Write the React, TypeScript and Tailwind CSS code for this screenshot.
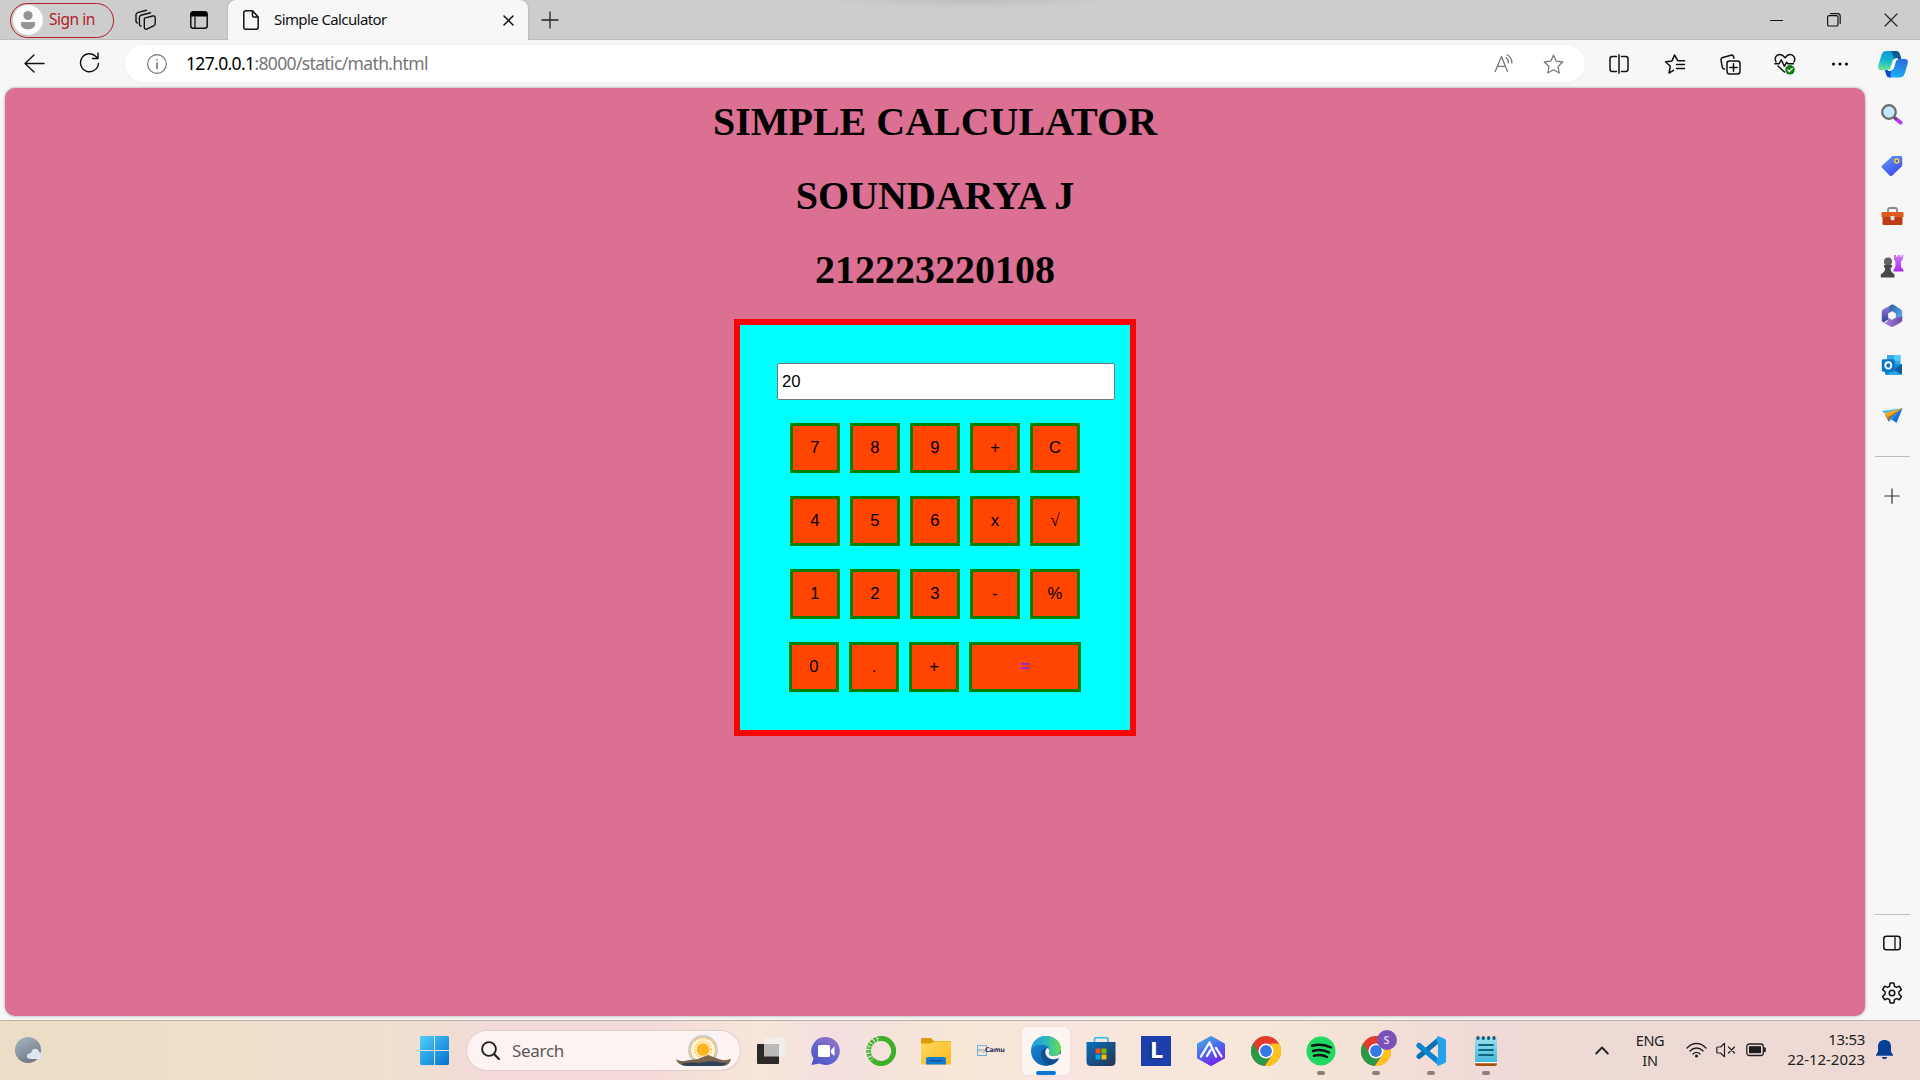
import React from "react";

type IconProps = { w: number; h: number; vb?: string; className?: string; children: React.ReactNode };

function Icon({ w, h, vb, className = "", children }: IconProps) {
  return (
    <svg width={w} height={h} viewBox={vb ?? `0 0 ${w} ${h}`} fill="none" stroke="none" strokeLinecap="round" strokeLinejoin="round" className={`shrink-0 ${className}`}>
      {children}
    </svg>
  );
}

function TabStrip() {
  return (
    <div className="flex h-10 items-center bg-[#cdcdcd] shadow-[inset_0_-1px_0_#bdbdbd]">
      <div className="ml-[10px] flex h-[35px] w-[104px] items-center rounded-full border-[1.5px] border-[#b01e28]">
        <Icon w={30} h={30} className="ml-[2px]">
          <circle cx="15" cy="15" r="15" fill="#fbfbfb" />
          <circle cx="15" cy="10.5" r="4.6" fill="#949494" />
          <path d="M8 17h14v2.5c0 3-3.2 4.8-7 4.8s-7-1.800-7-4.800z" fill="#949494" />
        </Icon>
        <span className="-mt-[2px] ml-[6px] whitespace-nowrap text-[15.5px] leading-5 tracking-[-0.5px] text-[#b01e28]">Sign in</span>
      </div>
      <Icon w={22} h={22} className="ml-[21px]">
        <g stroke="#111" strokeWidth="1.4">
          <path d="M9.500 9.200l8-2.200c1.500-.4 2.700.3 2.700 1.800v5.800c0 1.100-.6 1.900-1.600 2.200l-6.800 3.300c-1.500.4-2.500-.3-2.500-1.800v-7.300c0-1 .1-1.500.2-1.800z" />
          <path d="M6 17l-.6-.2c-.8-.4-1-.9-1-1.700V8.600c0-1.200.5-2 1.600-2.400l9.500-2.400" />
          <path d="M2.200 14l-.5-.4c-.5-.4-.7-.9-.7-1.600V6c0-1.200.5-2 1.600-2.400L11.500 1.200" />
        </g>
      </Icon>
      <Icon w={18} h={18} className="ml-[33px]">
        <rect x=".8" y=".8" width="16.400" height="16.400" rx="2.500" stroke="#111" strokeWidth="1.500" />
        <path d="M.8 3.200C.8 1.700 1.700.8 3.200.8h11.600c1.500 0 2.400.9 2.400 2.400v2.300H.8z" fill="#000" />
        <path d="M5 6v11" stroke="#111" strokeWidth="1.300" />
      </Icon>
      <div className="ml-[20px] flex h-10 w-[300px] items-center rounded-t-[8px] bg-[#f7f7f7] shadow-[0_0_2px_#999] [clip-path:inset(0_-4px_0_-4px)]">
        <Icon w={16} h={20} className="ml-[15px]">
          <path d="M3 .8h6.500l5.700 6.200v10.300c0 1.200-.7 1.900-1.900 1.900H3c-1.300 0-2.200-.7-2.200-1.900V2.700C.8 1.500 1.600.8 3 .8z M9.500.8v4.600c0 1 .5 1.600 1.500 1.600h4.200" stroke="#111" strokeWidth="1.500" />
        </Icon>
        <span className="-mt-[2px] ml-[15px] w-[215px] whitespace-nowrap text-[15px] leading-5 tracking-[-0.6px] text-[#111]">Simple Calculator</span>
        <Icon w={11} h={11} className="ml-[14px] mt-[1px]">
          <path d="M1 1l9 9M10 1l-9 9" stroke="#111" strokeWidth="1.500" />
        </Icon>
      </div>
      <Icon w={18} h={18} className="-mt-[1px] ml-[13px]">
        <path d="M9 1v16M1 9h16" stroke="#222" strokeWidth="1.300" />
      </Icon>
      <div className="ml-[262px] h-[8px] w-[300px] self-start bg-[radial-gradient(ellipse_at_top,#bfbfbf_0%,#cdcdcd_70%)]" />
      <div className="ml-auto flex items-center pr-[22px]">
        <Icon w={13} h={13}><path d="M0 6.500h13" stroke="#111" strokeWidth="1" /></Icon>
        <Icon w={14} h={14} className="ml-[44px]">
          <rect x=".6" y="2.600" width="10.400" height="10.400" rx="1.600" stroke="#111" strokeWidth="1.200" />
          <path d="M3.500.6h7c1.600 0 2.700 1 2.700 2.700v7" stroke="#111" strokeWidth="1.200" />
        </Icon>
        <Icon w={14} h={14} className="ml-[43px]"><path d="M1 1l12 12M13 1L1 13" stroke="#222" strokeWidth="1.200" /></Icon>
      </div>
    </div>
  );
}

const STAR = "M10.500 1.200l2.800 6 6.400.8-4.700 4.500 1.200 6.500-5.700-3.200-5.700 3.200 1.200-6.500L1.300 8l6.400-.8z";

function Toolbar() {
  return (
    <div className="flex h-12 items-center bg-[#f7f7f7]">
      <Icon w={21} h={19} className="ml-[24px] -mt-[2px]">
        <path d="M10 1L1 9.500 10 18M1 9.500h19" stroke="#111" strokeWidth="1.400" />
      </Icon>
      <Icon w={21} h={22} className="ml-[34px] -mt-[2px]">
        <path d="M19.500 11.500a9 9 0 1 1-2.500-7L19 6.500M19 1v5.500h-5.500" stroke="#111" strokeWidth="1.400" />
      </Icon>
      <div className="-mt-[1px] ml-[25px] flex h-[37px] w-[1460px] items-center rounded-full bg-white shadow-[0_0_5px_#ededed]">
        <Icon w={20} h={20} className="ml-[22px]">
          <circle cx="10" cy="10" r="9.300" stroke="#747474" strokeWidth="1.200" />
          <path d="M10 9v5.500M10 5.800v.3" stroke="#666" strokeWidth="1.500" />
        </Icon>
        <span className="-mt-[1px] ml-[19px] whitespace-nowrap text-[17.5px] leading-6 tracking-[-0.64px] text-[#767676]"><span className="text-black">127.0.0.1</span>:8000/static/math.html</span>
        <div className="ml-auto flex items-center pr-[21px]">
          <Icon w={21} h={20} className="mr-[28px]">
            <path d="M1.200 17.500L7.500 2.500l6 15M3.300 12.300h8.200" stroke="#777" strokeWidth="1.300" />
            <path d="M11.200 3.800c1.500 1.200 2.300 2.800 2.200 5M12 .8c3.200 1.700 5 4.500 4.800 8.200" stroke="#777" strokeWidth="1.300" transform="translate(1 0)" />
          </Icon>
          <Icon w={21} h={20}><path d={STAR} stroke="#777" strokeWidth="1.300" /></Icon>
        </div>
      </div>
      <Icon w={20} h={20} className="ml-[24px]">
        <path d="M7.500 2.500H3.300C1.800 2.500 1 3.300 1 4.800v10.400c0 1.500.8 2.300 2.300 2.300h4.200M12.500 2.500h4.200c1.500 0 2.300.8 2.300 2.300v10.400c0 1.500-.8 2.300-2.300 2.300h-4.200M10 .8v18.400" stroke="#111" strokeWidth="1.500" />
      </Icon>
      <Icon w={22} h={20} className="ml-[35px]">
        <path d="M20.500 6.700h-6.700L10.500 1 8 6.900l-6.500.9 4.800 4.500-1.300 6.700 4.500-2.600M12.500 10.500h8M12.500 14.500h8" stroke="#111" strokeWidth="1.500" />
      </Icon>
      <Icon w={21} h={21} className="ml-[34px]">
        <rect x="7" y="7" width="13" height="13" rx="2.500" stroke="#111" strokeWidth="1.500" />
        <path d="M13.500 9.800v7.400M9.800 13.500h7.400M4.500 15l-1-.3c-.7-.3-1-.8-1.200-1.500L1 6.200c-.2-1.500.3-2.300 1.700-2.700L11 1.200c1.400-.3 2.200.1 2.600 1.400l.3 1.600" stroke="#111" strokeWidth="1.500" />
      </Icon>
      <Icon w={22} h={22} className="ml-[33px]">
        <path d="M2 9C-.2 4.200 3 1.500 5.800 1.500c2 0 3.500 1 5.200 3.200 1.700-2.200 3.200-3.200 5.200-3.200C19.500 1.500 22 5 20 9M1 10.800h4l2.300-4 3 6.500 2.300-4 1.300 1.500h5.500M4 13l6.500 6" stroke="#111" strokeWidth="1.500" />
        <circle cx="16" cy="16.800" r="4.800" fill="#0e7a18" />
        <path d="M13.800 17l1.500 1.500 3-3.200" stroke="#fff" strokeWidth="1.200" />
      </Icon>
      <Icon w={18} h={6} className="ml-[35px]">
        <circle cx="2.500" cy="3" r="1.600" fill="#000" /><circle cx="9" cy="3" r="1.600" fill="#000" /><circle cx="15.500" cy="3" r="1.600" fill="#000" />
      </Icon>
      <Icon w={30} h={27} className="ml-[29px]">
        <defs>
          <linearGradient id="cpA" x1=".3" y1="0" x2=".2" y2="1"><stop stopColor="#0d96dc" /><stop offset=".5" stopColor="#16b8cf" /><stop offset="1" stopColor="#71e58e" /></linearGradient>
          <linearGradient id="cpB" x1=".6" y1="0" x2=".3" y2="1"><stop stopColor="#2b6fdc" /><stop offset="1" stopColor="#17b3fa" /></linearGradient>
        </defs>
        <path d="M8.500 0h9.500c2 0 3 .8 3.800 3l1.500 5h-4.500c-2 0-2.600.8-3.200 3l-1.400 5c-.6 2.200-1.700 3.200-4 3.200H3C.5 19.200-.3 17 .4 14L3.500 4C4.300 1.200 5.800 0 8.500 0z" fill="url(#cpA)" />
        <path d="M18 0c2 0 3 .8 3.800 3l1.500 5h-4.500c-1.200 0-1.900.3-2.400 1L14.500 3c-.5-2-1-3-2-3z" fill="#0b5a93" />
        <path d="M21.500 26.500H12c-2 0-3-.8-3.700-3L6.900 19.200h3.300c2.300 0 3.400-1 4-3.200l1.400-5c.6-2.200 1.200-3 3.200-3H27c2.500 0 3.400 2 2.600 5l-2.900 9.500c-.8 2.800-2.500 4-5.200 4z" fill="url(#cpB)" />
        <path d="M12 26.500c-2 0-3-.8-3.700-3L6.900 19.200h3.300c1.900 0 3-.7 3.700-2.200L12.600 23c-.4 2-.1 3.500 1.400 3.500z" fill="#1346d0" />
        <path d="M13 18l2-7c.6-2.200 1.400-3 3.400-3h1c-1.500.3-2 1.200-2.500 3l-1.300 4.800c-.5 2-1.600 3-3.600 3.400h-1.300c1.200 0 1.900-.4 2.300-1.200z" fill="#fff" stroke="#fff" strokeWidth="1.500" />
      </Icon>
    </div>
  );
}

function Key({ label, wide }: { label: string; wide?: boolean }) {
  return (
    <button className={`flex h-[50px] items-center justify-center border-[3px] border-[green] bg-[#ff4500] font-['Liberation_Sans',sans-serif] text-[16.67px] leading-5 ${wide ? "w-[112px] font-bold text-[#8a2be2]" : "w-[50px] text-black"}`}>
      {label === "√" ? <span className="font-['Liberation_Serif',serif] text-[17px]">√</span> : label}
    </button>
  );
}

const KEY_ROWS = [
  ["7", "8", "9", "+", "C"],
  ["4", "5", "6", "x", "√"],
  ["1", "2", "3", "-", "%"],
  ["0", ".", "+", "="],
];

function CalculatorPage() {
  return (
    <main className="ml-[5px] flex h-[928px] w-[1860px] flex-col items-center rounded-[10px] bg-[#db7093] pt-[11px] shadow-[0_0_3px_#999]">
      {["SIMPLE CALCULATOR", "SOUNDARYA J", "212223220108"].map((t) => (
        <h1 key={t} className="mb-7 h-[46px] whitespace-nowrap font-['Liberation_Serif',serif] text-[40px] font-bold leading-[46px] text-black">{t}</h1>
      ))}
      <section className="-mt-[2px] flex h-[417px] w-[402px] flex-col items-center border-[6px] border-[red] bg-[cyan] pt-[38px]">
        <div className="ml-[22px] flex h-[37px] w-[338px] items-center rounded-[2px] border border-[#767676] bg-white pl-1 font-['Liberation_Sans',sans-serif] text-[16.67px] text-black">20</div>
        <div className="mt-[23px] flex flex-col items-center gap-[23px]">
          {KEY_ROWS.map((row, i) => (
            <div key={i} className="flex gap-[10px]">
              {row.map((k) => <Key key={k} label={k} wide={k === "="} />)}
            </div>
          ))}
        </div>
      </section>
    </main>
  );
}

function Sidebar() {
  return (
    <aside className="flex h-[932px] flex-1 flex-col items-center pr-px">
      <Icon w={22} h={22} className="mt-[16px]">
        <path d="M14.500 14.500l5 4" stroke="#b23cf5" strokeWidth="4" />
        <path d="M12.800 12.800l2 2" stroke="#555" strokeWidth="2.500" />
        <circle cx="8" cy="8" r="6.800" fill="#c5e7fb" stroke="#696969" strokeWidth="2.200" />
      </Icon>
      <Icon w={22} h={22} className="mt-[29px]">
        <defs><linearGradient id="tag" x1="0" y1="0" x2=".6" y2="1"><stop stopColor="#5da3f7" /><stop offset="1" stopColor="#4247f0" /></linearGradient></defs>
        <path d="M11.500 1h8c1 0 1.700.7 1.700 1.700v8.200L11.300 20.400c-.9.900-1.800.9-2.700 0L1.200 13c-.8-.9-.8-1.700 0-2.500z" fill="url(#tag)" />
        <circle cx="15.800" cy="6" r="2" fill="#4c5ccf" stroke="#ffd43b" strokeWidth="1.500" />
      </Icon>
      <Icon w={23} h={19} className="mt-[30px]">
        <path d="M7 5V3c0-1.500.7-2 2-2h5c1.300 0 2 .5 2 2v2" stroke="#888" strokeWidth="1.800" />
        <path d="M1.500 9h20v7.500c0 1-.7 1.500-1.500 1.500H3c-.9 0-1.500-.5-1.500-1.500z" fill="#bd3d12" />
        <path d="M.5 6.200c0-.8.5-1.200 1.200-1.200h19.600c.7 0 1.200.4 1.200 1.200V10H.5z" fill="#df5a1c" />
        <path d="M9.500 9h4v2.800c0 1-.7 1.700-2 1.700s-2-.7-2-1.700z" fill="#ddd" />
      </Icon>
      <Icon w={24} h={24} className="mt-[28px]">
        <defs><linearGradient id="rook" x1="0" y1="0" x2="0" y2="1"><stop stopColor="#cf7cf4" /><stop offset="1" stopColor="#a829ee" /></linearGradient></defs>
        <path d="M14 1h2v1.700h1.700V1h2.400v1.700h1.600V1H23.500l-1 5-1.500 1.200v5.500l2.500 3.300v1.500H13.500V16l1.900-3.300V7.200L14 6z" fill="url(#rook)" />
        <circle cx="8" cy="7.500" r="4" fill="#626262" />
        <path d="M4 11h8v2l-1.500 1c0 3 1 4.500 4 6.200v3.300H.8v-3.300c3.200-1.700 4.400-3.200 4.400-6.200L4 13z" fill="#484848" />
      </Icon>
      <Icon w={22} h={23} className="mt-[26px]">
        <defs>
          <linearGradient id="m1" x1="0" y1="0" x2="0" y2="1"><stop stopColor="#a07be0" /><stop offset="1" stopColor="#33479c" /></linearGradient>
          <linearGradient id="m2" x1="0" y1="0" x2="1" y2="1"><stop stopColor="#2a5c9c" /><stop offset="1" stopColor="#62b8f7" /></linearGradient>
          <linearGradient id="m3" x1="0" y1="0" x2="1" y2="0"><stop stopColor="#b184e6" /><stop offset="1" stopColor="#6a4aa4" /></linearGradient>
        </defs>
        <path d="M11 .5L2.300 5.300C1.200 6 .8 6.800.8 8v8c0 1.300.5 2 1.500 2.500l5.200-3V9.500L11 7.500z" fill="url(#m1)" />
        <path d="M11 .5c-2 .8-3 3-3 5v3.700l3-1.700 3.500 2v4l6.700 2.500V8c0-1.200-.5-2.100-1.600-2.700L13 1c-.7-.4-1.300-.6-2-.5z" fill="url(#m2)" />
        <path d="M21.200 12v4c0 1-.5 1.800-1.500 2.400l-7 4c-1.200.6-2.200.6-3.400 0L2.300 18.500c3 .3 5-1 5.200-5l3.500 2 3.500-2c3-.2 5.500 0 6.700-1.500z" fill="url(#m3)" />
        <path d="M11 7.300l3.800 2.100v4.200L11 15.700l-3.800-2.100V9.400z" fill="#f7f7f7" />
      </Icon>
      <Icon w={22} h={22} className="mt-[27px]">
        <path d="M6 1h13.500v11H6z" fill="#36a9ea" /><path d="M13 1h6.500v6H13z" fill="#55cbfb" /><path d="M6 7h7v5H6z" fill="#0875c8" />
        <path d="M4 11l17-1v9.500c0 .8-.5 1.500-1.500 1.500h-14C4.600 21 4 20.300 4 19.500z" fill="#1686cc" /><path d="M13 16l8-6v10z" fill="#0c5d9a" /><path d="M12 16l8.500 5H6z" fill="#2caae8" />
        <rect x=".8" y="5.200" width="13" height="12.500" rx="1.500" fill="#0877ca" />
        <ellipse cx="7.300" cy="11.400" rx="3" ry="3.200" stroke="#fff" strokeWidth="1.900" />
      </Icon>
      <Icon w={22} h={18} className="mt-[31px]">
        <path d="M.5 4L21.500 1.200 8 9z" fill="#42bdf2" /><path d="M4 7.500L21.500 1.200 7.500 14.500z" fill="#b8650c" /><path d="M4 6l17.500-4.800L6.500 10.500z" fill="#f7aa16" />
        <path d="M21.500 1.200L15.500 16 8.500 11z" fill="#1473d8" /><path d="M21.500 1.200L8 12.500 7.500 15l3.500-3z" fill="#4598f6" />
      </Icon>
      <div className="mt-[31px] h-px w-[35px] bg-[#bdbdbd]" />
      <Icon w={16} h={16} className="mt-[31px]"><path d="M8 .8v14.400M.8 8h14.400" stroke="#333" strokeWidth="1.200" /></Icon>
      <div className="mt-auto h-px w-[35px] shrink-0 bg-[#bdbdbd]" />
      <Icon w={18} h={16} className="mt-[20px]">
        <rect x=".8" y="1.300" width="16.400" height="13.400" rx="2.500" stroke="#111" strokeWidth="1.500" /><path d="M12 1.500v13" stroke="#111" strokeWidth="1.300" />
      </Icon>
      <Icon w={22} h={22} className="mb-[16px] mt-[31px]" vb="1 1 20 20">
        <path d="M9.300 1h3.400l.6 2.900 1.700 1 2.800-1 1.700 3-2.200 2v2.200l2.200 2-1.700 3-2.800-1-1.700 1-.6 2.900H9.300l-.6-2.900-1.700-1-2.800 1-1.700-3 2.200-2V8.900l-2.200-2 1.700-3 2.800 1 1.700-1z" transform="translate(0 1)" stroke="#111" strokeWidth="1.400" />
        <circle cx="11" cy="11" r="2.500" stroke="#111" strokeWidth="1.400" />
      </Icon>
    </aside>
  );
}

function ChromeMark() {
  return (
    <g>
      <circle cx="15" cy="15" r="15" fill="#e33b2e" />
      <path d="M2 7.500A15 15 0 0 0 13.500 30l7.500-11.500h-12z" fill="#2b9a48" />
      <path d="M28 7.500A15 15 0 0 1 13.800 30l7.700-11.500-2-11z" fill="#fcc31e" />
      <circle cx="15" cy="15" r="7.500" fill="#fff" /><circle cx="15" cy="15" r="5.900" fill="#3478e5" />
    </g>
  );
}

function AppSlot({ children, active, running }: { children: React.ReactNode; active?: boolean; running?: boolean }) {
  return (
    <div className="flex h-[59px] w-[55px] items-center justify-center">
      <div className={`flex h-12 w-12 flex-col items-center pt-[9px] ${active ? "rounded-[5px] bg-white/60 shadow-[0_0_1px_#bbb]" : ""}`}>
        {children}
        {active && <div className="mt-[5px] h-1 w-5 rounded-full bg-[#0878d4]" />}
        {running && <div className="mt-[5px] h-1 w-2 rounded-full bg-[#8a7f7c]" />}
      </div>
    </div>
  );
}

function Taskbar() {
  return (
    <footer className="flex h-[60px] items-center border-t border-[#b9b0a7] bg-[linear-gradient(90deg,#ebddc6_0,#efdfca_200px,#efe0cf_390px,#f3d9d8_500px,#f4dad8_650px,#f7e6d9_760px,#f4dfe0_830px,#f7e7d6_960px,#f9e5df_1060px,#f6e7d8_1260px,#f0d9d6_1490px,#eedad5_1600px,#eed9d4_1920px)]">
      <Icon w={30} h={28} className="ml-[14px] -mt-[2px]">
        <defs><linearGradient id="moon" x1="0" y1="0" x2=".5" y2="1"><stop stopColor="#a8b6c5" /><stop offset="1" stopColor="#727b87" /></linearGradient></defs>
        <circle cx="14" cy="14" r="13" fill="url(#moon)" />
        <path d="M17 23c-6-.2-5-6 0-6 1-6 8-5 8.500-.5 4.500.7 4.500 6.500 0 6.500z" fill="#dfe5ee" />
      </Icon>
      <Icon w={29} h={29} className="ml-[376px]">
        <defs><linearGradient id="win" x1="0" y1="0" x2="1" y2="1"><stop stopColor="#4fd0fc" /><stop offset="1" stopColor="#0370d0" /></linearGradient></defs>
        <path d="M1.500 0H14v14H0V1.500C0 .6.600 0 1.500 0zM15 0h12.500c.9 0 1.500.6 1.500 1.500V14H15zM0 15h14v14H1.500C.6 29 0 28.400 0 27.500zM15 15h14v12.500c0 .9-.6 1.500-1.500 1.500H15z" fill="url(#win)" />
      </Icon>
      <div className="ml-[18px] flex h-[39px] w-[273px] items-center rounded-full bg-[#fcf3f2] shadow-[0_0_0_1px_#e0cfcb,0_1px_0_#c5b4b0]">
        <Icon w={19} h={19} className="ml-[14px]"><circle cx="8" cy="8" r="6.900" stroke="#222" strokeWidth="1.900" /><path d="M13 13l5 5" stroke="#222" strokeWidth="2.200" /></Icon>
        <span className="ml-[12px] text-[17px] leading-6 tracking-[-0.3px] text-[#5c5655]">Search</span>
        <Icon w={56} h={33} className="ml-auto mr-[8px]">
          <circle cx="27" cy="16" r="14.300" fill="#fff4e0" stroke="#adcce0" strokeWidth="1.200" /><circle cx="27" cy="16" r="12.800" stroke="#f3bd70" strokeWidth="1.500" />
          <circle cx="27" cy="15.500" r="8" stroke="#ffc83d" strokeWidth="2" strokeDasharray="1.200 1.500" strokeLinecap="butt" /><circle cx="27" cy="15.500" r="6.300" fill="#ffb51e" />
          <path d="M0 25c4 3 8 2 14 1l8-1 10-4 8 3 6 2c4 .5 6-.5 9-1-1 4-3 7-9 7H11c-6 0-10-3-11-7z" fill="#7b6551" /><path d="M5 30c11-3 14 0 24-2s13 1 22 1c-2 2-4 3-8 3H12c-3 0-5-1-7-2z" fill="#2e4155" />
        </Icon>
      </div>
      <div className="ml-[3px] flex">
        <AppSlot>
          <Icon w={30} h={30}>
            <rect x="1" y="8" width="22" height="20" rx="1" fill="#2b2a29" /><path d="M9 1.300h19c1 0 1.500.5 1.500 1.500v16c0 1-.5 1.500-1.500 1.500H8V2.500c0-.8.400-1.200 1-1.200z" fill="#efeeed" fillOpacity=".9" /><path d="M8 8h15v12.300H8z" fill="#bcbab9" />
          </Icon>
        </AppSlot>
        <AppSlot>
          <Icon w={30} h={30}>
            <defs><linearGradient id="chat" x1="0" y1="1" x2=".8" y2="0"><stop stopColor="#4b50c6" /><stop offset=".5" stopColor="#6267cd" /><stop offset="1" stopColor="#9b73c6" /></linearGradient></defs>
            <path d="M15 1a14 14 0 1 1-6.500 26.500L.5 29l2-6.500A14 14 0 0 1 15 1z" fill="url(#chat)" /><rect x="7" y="9" width="12" height="12" rx="1.500" fill="#fff" /><path d="M20 14l3.500-3.500V20L20 17z" fill="#fff" />
          </Icon>
        </AppSlot>
        <AppSlot>
          <Icon w={30} h={30}>
            <path d="M14 2.500a12.500 12.500 0 1 1-8 21" stroke="#3eb02a" strokeWidth="5" strokeLinecap="butt" />
            <path d="M14 2.500A12.500 12.500 0 0 0 6.200 23.700" stroke="#3eb02a" strokeWidth="4.800" strokeDasharray="2.600 .9" strokeLinecap="butt" />
            <path d="M13 2.300A12.800 12.800 0 0 0 6.500 24.500" stroke="#f5e4dc" strokeWidth=".9" strokeDasharray="2 2.500" strokeLinecap="butt" />
          </Icon>
        </AppSlot>
        <AppSlot>
          <Icon w={30} h={30}>
            <defs><linearGradient id="fold" x1="0" y1="0" x2="1" y2="1"><stop stopColor="#ffd95e" /><stop offset="1" stopColor="#fbb920" /></linearGradient></defs>
            <path d="M0 3.500C0 2.600.600 2 1.500 2H10l3 3h15.500c1 0 1.500.6 1.500 1.500V12H0z" fill="#dc9c0a" /><path d="M0 7.500h10l3-2h16c.6 0 1 .4 1 1v21c0 .6-.4 1-1 1H1c-.6 0-1-.4-1-1z" fill="url(#fold)" />
            <path d="M5 28.500v-5c0-1.700.8-2.500 2.500-2.500h15c1.700 0 2.500.8 2.500 2.500v5z" fill="#137bd2" /><path d="M9 24.800h12" stroke="#084f91" strokeWidth="1.500" />
          </Icon>
        </AppSlot>
        <AppSlot>
          <div className="mt-[9px] flex h-[21px] w-[27px] items-start">
            <div className="flex h-[11px] w-[10px] shrink-0 items-center border border-[#6cb4dd] text-[5px] leading-[5px] text-[#3f93ca]">my</div>
            <span className="-ml-[2px] mt-[1px] font-['DejaVu_Sans',sans-serif] text-[6.5px] font-bold leading-[8px] tracking-[-0.2px] text-[#303756]">Camu</span>
          </div>
        </AppSlot>
        <AppSlot active>
          <Icon w={30} h={30}>
            <defs>
              <linearGradient id="eg1" x1="0" y1=".4" x2="1" y2=".4"><stop stopColor="#1f9fdc" /><stop offset=".5" stopColor="#2cb7bf" /><stop offset="1" stopColor="#69df4c" /></linearGradient>
              <linearGradient id="eg2" x1="0" y1="0" x2="1" y2="1"><stop stopColor="#1b91da" /><stop offset="1" stopColor="#0b4d99" /></linearGradient>
            </defs>
            <circle cx="15" cy="15" r="15" fill="url(#eg2)" />
            <path d="M.2 13C1.500 5 7.500 0 15 0c8.500 0 15 5.500 15 12.500 0 4.500-3 7.500-7 7.500-3.500 0-5.500-1.500-5.500-2.600 0-.8 1.200-1.200 1.200-3.200 0-2.800-3-5.500-7.700-5.500C6.500 8.700 2.500 10 .2 13z" fill="url(#eg1)" />
            <path d="M14.500 12c-3.500 1.200-5 4.500-4.200 8 1 4.600 5 8.300 9.700 9 3.500-1 6.500-3.500 7.700-6.200-5 2.500-10.500 1-12.700-2.800-1.300-2.300-1.500-5-.5-8z" fill="#114d8f" />
            <path d="M31 20.500L28 22c-5.500 2.300-10.500 1-12.800-2.800-1.500-2.600-.9-5.700 1.300-7.200 2 .8 2.500 2.800 1.500 4.500-1 2 1.200 3.500 5 3.500 2.500 0 4.500-.8 6-2.500z" fill="#fbf0ec" />
          </Icon>
        </AppSlot>
        <AppSlot>
          <Icon w={30} h={30}>
            <defs><linearGradient id="store" x1="0" y1="0" x2="1" y2="1"><stop stopColor="#0871bd" /><stop offset="1" stopColor="#253150" /></linearGradient></defs>
            <path d="M8.500 6V3c0-.8.400-1.200 1.200-1.200h11c.8 0 1.200.4 1.200 1.200v3" stroke="#29bce9" strokeWidth="1.600" /><path d="M.5 6h29v19.500c0 3-1.500 4.500-4.500 4.500H5c-3 0-4.500-1.500-4.500-4.500z" fill="url(#store)" />
            <path d="M9.500 12.500h5v5h-5z" fill="#f25022" /><path d="M15.500 12.500h5v5h-5z" fill="#7fba00" /><path d="M9.500 18.500h5v5h-5z" fill="#00a4ef" /><path d="M15.500 18.500h5v5h-5z" fill="#ffb900" />
          </Icon>
        </AppSlot>
        <AppSlot><div className="flex h-[30px] w-[30px] items-center justify-center bg-[#1d3fae] pl-[3px] font-['Inter',sans-serif] text-[22px] font-extrabold text-white [text-shadow:-2px_1px_0_#123266]">L</div></AppSlot>
        <AppSlot>
          <Icon w={30} h={30}>
            <defs><linearGradient id="hex" x1=".2" y1="0" x2=".7" y2="1"><stop stopColor="#44a4e2" /><stop offset=".5" stopColor="#4d65ea" /><stop offset="1" stopColor="#7623ef" /></linearGradient></defs>
            <path d="M15 1.500l12.500 7v13L15 28.500l-12.500-7v-13z" fill="url(#hex)" stroke="url(#hex)" strokeWidth="3" /><path d="M5 20.500l8.500-14 6.500 14M11 20l3.500-6M20 12l5.500 8.500" stroke="#fff" strokeWidth="2.300" />
          </Icon>
        </AppSlot>
        <AppSlot><Icon w={30} h={30}><ChromeMark /></Icon></AppSlot>
        <AppSlot running><Icon w={30} h={30}><circle cx="15" cy="15" r="14.500" fill="#1fd962" /><path d="M6 9.800c7-2 13.500-1.300 19 1.700M7 15c6-1.600 11.500-1 16 1.500M8 19.700c5-1.200 9.500-.7 13 1.300" stroke="#101010" strokeWidth="2.500" /></Icon></AppSlot>
        <AppSlot running>
          <div className="relative h-[30px]">
            <Icon w={30} h={30}><ChromeMark /></Icon>
            <div className="absolute -top-[6px] left-[16px] flex h-5 w-5 items-center justify-center rounded-full bg-[#7c51b7] text-[11px] font-semibold leading-none text-[#ded3ee]">S</div>
          </div>
        </AppSlot>
        <AppSlot running><Icon w={30} h={30}><path d="M3 9.500L22 25.500M3 20.500L22 4.500" stroke="#0d70b6" strokeWidth="5" /><path d="M3 9.500L22 25.500" stroke="#0c84d4" strokeWidth="4.500" /><path d="M22 0l6.500 2.800c1 .5 1.500 1.200 1.500 2.200v20c0 1-.5 1.700-1.500 2.200L22 30l-2-3 2-5.500v-13L20 3z" fill="#25a2ed" /></Icon></AppSlot>
        <AppSlot running>
          <Icon w={24} h={30}><defs><linearGradient id="note" x1="0" y1="0" x2="0" y2="1"><stop stopColor="#9be0ed" /><stop offset="1" stopColor="#42b9dc" /></linearGradient></defs>
            <path d="M1 2h22v24H1z" fill="url(#note)" /><path d="M1 26h22v1.500H1z" fill="#fff" /><path d="M1 27.300h22c0 1.700-.5 2.700-2 2.700H3c-1.500 0-2-1-2-2.700z" fill="#a4530d" />
            <path d="M5 9h14M5 14h14M5 19h14" stroke="#126683" strokeWidth="1.800" />{[4, 9.300, 14.600, 20].map((x) => <ellipse key={x} cx={x} cy="2" rx="1.700" ry="2" fill="#145d78" />)}
          </Icon>
        </AppSlot>
      </div>
      <div className="ml-auto flex items-center text-[#222]">
        <Icon w={14} h={9}><path d="M1.200 7.500L7 1.500l5.800 6" stroke="#222" strokeWidth="1.800" /></Icon>
        <div className="-mt-[2px] ml-[24px] w-[34px] text-center text-[14.5px] leading-5 tracking-[-0.3px]">ENG<br />IN</div>
        <Icon w={21} h={16} className="-mt-[2px] ml-[19px]">
          <path d="M1 6c5.500-6 13.500-6 19 0M4 9c3.800-4 9.200-4 13 0M7 12c2-2.200 5-2.200 7 0" stroke="#222" strokeWidth="1.400" /><circle cx="10.500" cy="14" r="1.600" fill="#222" />
        </Icon>
        <Icon w={20} h={16} className="-mt-[2px] ml-[9px]">
          <path d="M1.500 5h3l4-3.700v13.400L4.500 11h-3c-.5 0-.7-.3-.7-.8V5.800c0-.5.2-.8.7-.8zM12.500 5l6 6M18.500 5l-6 6" stroke="#222" strokeWidth="1.200" />
        </Icon>
        <Icon w={21} h={14} className="-mt-[2px] ml-[10px]"><rect x=".8" y="1" width="16.500" height="11.500" rx="2.500" stroke="#222" strokeWidth="1.300" /><rect x="3" y="3.200" width="12" height="7" fill="#1b1b1b" /><path d="M18.800 5.300v3" stroke="#222" strokeWidth="2" /></Icon>
        <div className="-mt-[3px] ml-[19px] w-[79px] whitespace-nowrap text-right text-[15px] leading-5 tracking-[-0.05px]"><div className="tracking-[-0.3px]">13:53</div><div className="flex justify-end">22-12-2023</div></div>
        <Icon w={17} h={20} className="-mt-[1px] ml-[11px] mr-[27px]"><path d="M8.500 0c4 0 6.500 2.700 6.500 6.500v5l2 3.500v.8H0V15l2-3.500v-5C2 2.700 4.500 0 8.500 0zM5.800 17h5.400c-.4 1.400-1.400 2-2.700 2s-2.300-.6-2.700-2z" fill="#063f94" /></Icon>
      </div>
    </footer>
  );
}

export default function App() {
  return (
    <div className="flex h-[1080px] w-[1920px] flex-col overflow-hidden bg-[#f7f7f7] font-['Noto_Sans',sans-serif]">
      <TabStrip />
      <Toolbar />
      <div className="flex h-[932px]">
        <CalculatorPage />
        <Sidebar />
      </div>
      <Taskbar />
    </div>
  );
}
